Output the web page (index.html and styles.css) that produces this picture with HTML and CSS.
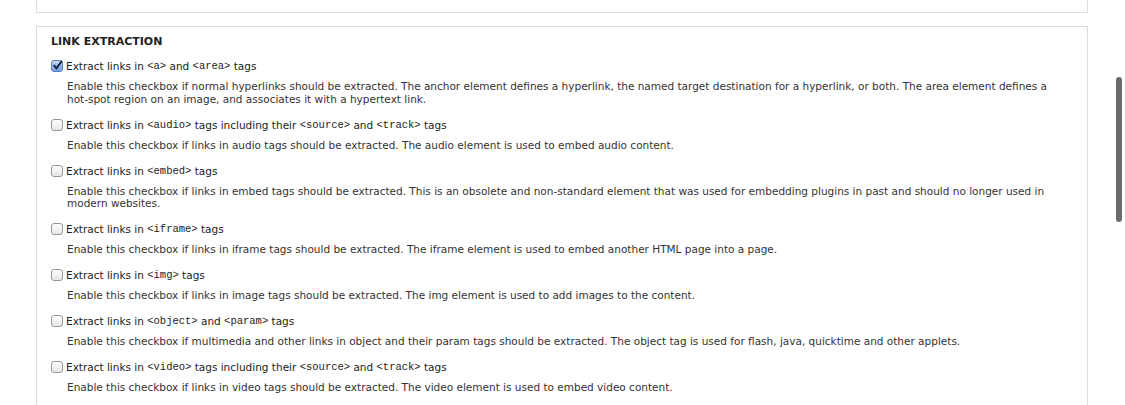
FILE: index.html
```html
<!DOCTYPE html>
<html>
<head>
<meta charset="utf-8">
<link rel="stylesheet" href="styles.css">
</head>
<body>
<div class="page">
  <div class="prev-box"></div>
  <div class="fieldset">
    <div class="legend">LINK EXTRACTION</div>
    <div class="item">
      <label class="opt"><span class="cb checked"><svg viewBox="0 0 11 11" width="11" height="11"><path d="M2.2 5.6 L4.4 8.4 L9.4 1.6" fill="none" stroke="#16243a" stroke-width="1.9" stroke-linecap="round" stroke-linejoin="round"/></svg></span>Extract links in <code>&lt;a&gt;</code> and <code>&lt;area&gt;</code> tags</label>
      <div class="desc">Enable this checkbox if normal hyperlinks should be extracted. The anchor element defines a hyperlink, the named target destination for a hyperlink, or both. The area element defines a hot-spot region on an image, and associates it with a hypertext link.</div>
    </div>
    <div class="item">
      <label class="opt"><span class="cb"></span>Extract links in <code>&lt;audio&gt;</code> tags including their <code>&lt;source&gt;</code> and <code>&lt;track&gt;</code> tags</label>
      <div class="desc">Enable this checkbox if links in audio tags should be extracted. The audio element is used to embed audio content.</div>
    </div>
    <div class="item">
      <label class="opt"><span class="cb"></span>Extract links in <code>&lt;embed&gt;</code> tags</label>
      <div class="desc">Enable this checkbox if links in embed tags should be extracted. This is an obsolete and non-standard element that was used for embedding plugins in past and should no longer used in modern websites.</div>
    </div>
    <div class="item">
      <label class="opt"><span class="cb"></span>Extract links in <code>&lt;iframe&gt;</code> tags</label>
      <div class="desc">Enable this checkbox if links in iframe tags should be extracted. The iframe element is used to embed another HTML page into a page.</div>
    </div>
    <div class="item">
      <label class="opt"><span class="cb"></span>Extract links in <code>&lt;img&gt;</code> tags</label>
      <div class="desc">Enable this checkbox if links in image tags should be extracted. The img element is used to add images to the content.</div>
    </div>
    <div class="item">
      <label class="opt"><span class="cb"></span>Extract links in <code>&lt;object&gt;</code> and <code>&lt;param&gt;</code> tags</label>
      <div class="desc">Enable this checkbox if multimedia and other links in object and their param tags should be extracted. The object tag is used for flash, java, quicktime and other applets.</div>
    </div>
    <div class="item">
      <label class="opt"><span class="cb"></span>Extract links in <code>&lt;video&gt;</code> tags including their <code>&lt;source&gt;</code> and <code>&lt;track&gt;</code> tags</label>
      <div class="desc">Enable this checkbox if links in video tags should be extracted. The video element is used to embed video content.</div>
    </div>
  </div>
</div>
<div class="scrollbar"></div>
</body>
</html>
```
FILE: styles.css
```css
html, body {
  margin: 0;
  padding: 0;
  background: #ffffff;
  overflow: hidden;
  height: 405px;
}
body {
  font-family: "DejaVu Sans", "Liberation Sans", sans-serif;
  font-size: 10.5px;
  color: #333333;
}
.page {
  margin-left: 36px;
  width: 1052px;
}
.prev-box {
  height: 12px;
  border: 1px solid #dcdcdc;
  border-top: none;
}
.fieldset {
  margin-top: 13px;
  border: 1px solid #dcdcdc;
  border-bottom: none;
  padding: 8px 14px 0 14px;
  height: 400px;
}
.legend {
  font-weight: bold;
  font-size: 11px;
  line-height: 14px;
  color: #222222;
  margin-bottom: 10px;
}
.item {
  margin-bottom: 12.5px;
}
.opt {
  display: flex;
  align-items: center;
  line-height: 14px;
  color: #222222;
  white-space: pre;
}
.opt code {
  font-family: "Liberation Mono", "DejaVu Sans Mono", monospace;
  font-size: 10.5px;
}
.cb {
  width: 10px;
  height: 10px;
  border: 1px solid #9a9a9a;
  border-radius: 3px;
  background: linear-gradient(#ffffff, #e6e6e6);
  margin-right: 3px;
  position: relative;
  flex: none;
}
.cb.checked {
  background: linear-gradient(#c9dcf5, #6e9ee0);
  border-color: #5a7fb5;
}
.cb svg {
  position: absolute;
  left: 0;
  top: -1px;
}
.desc {
  margin-left: 16px;
  margin-top: 7px;
  line-height: 12.5px;
  color: #333333;
  padding-right: 10px;
}
.scrollbar {
  position: absolute;
  left: 1116px;
  top: 77px;
  width: 6px;
  height: 145px;
  border-radius: 3px;
  background: #6b6b6b;
}
```
